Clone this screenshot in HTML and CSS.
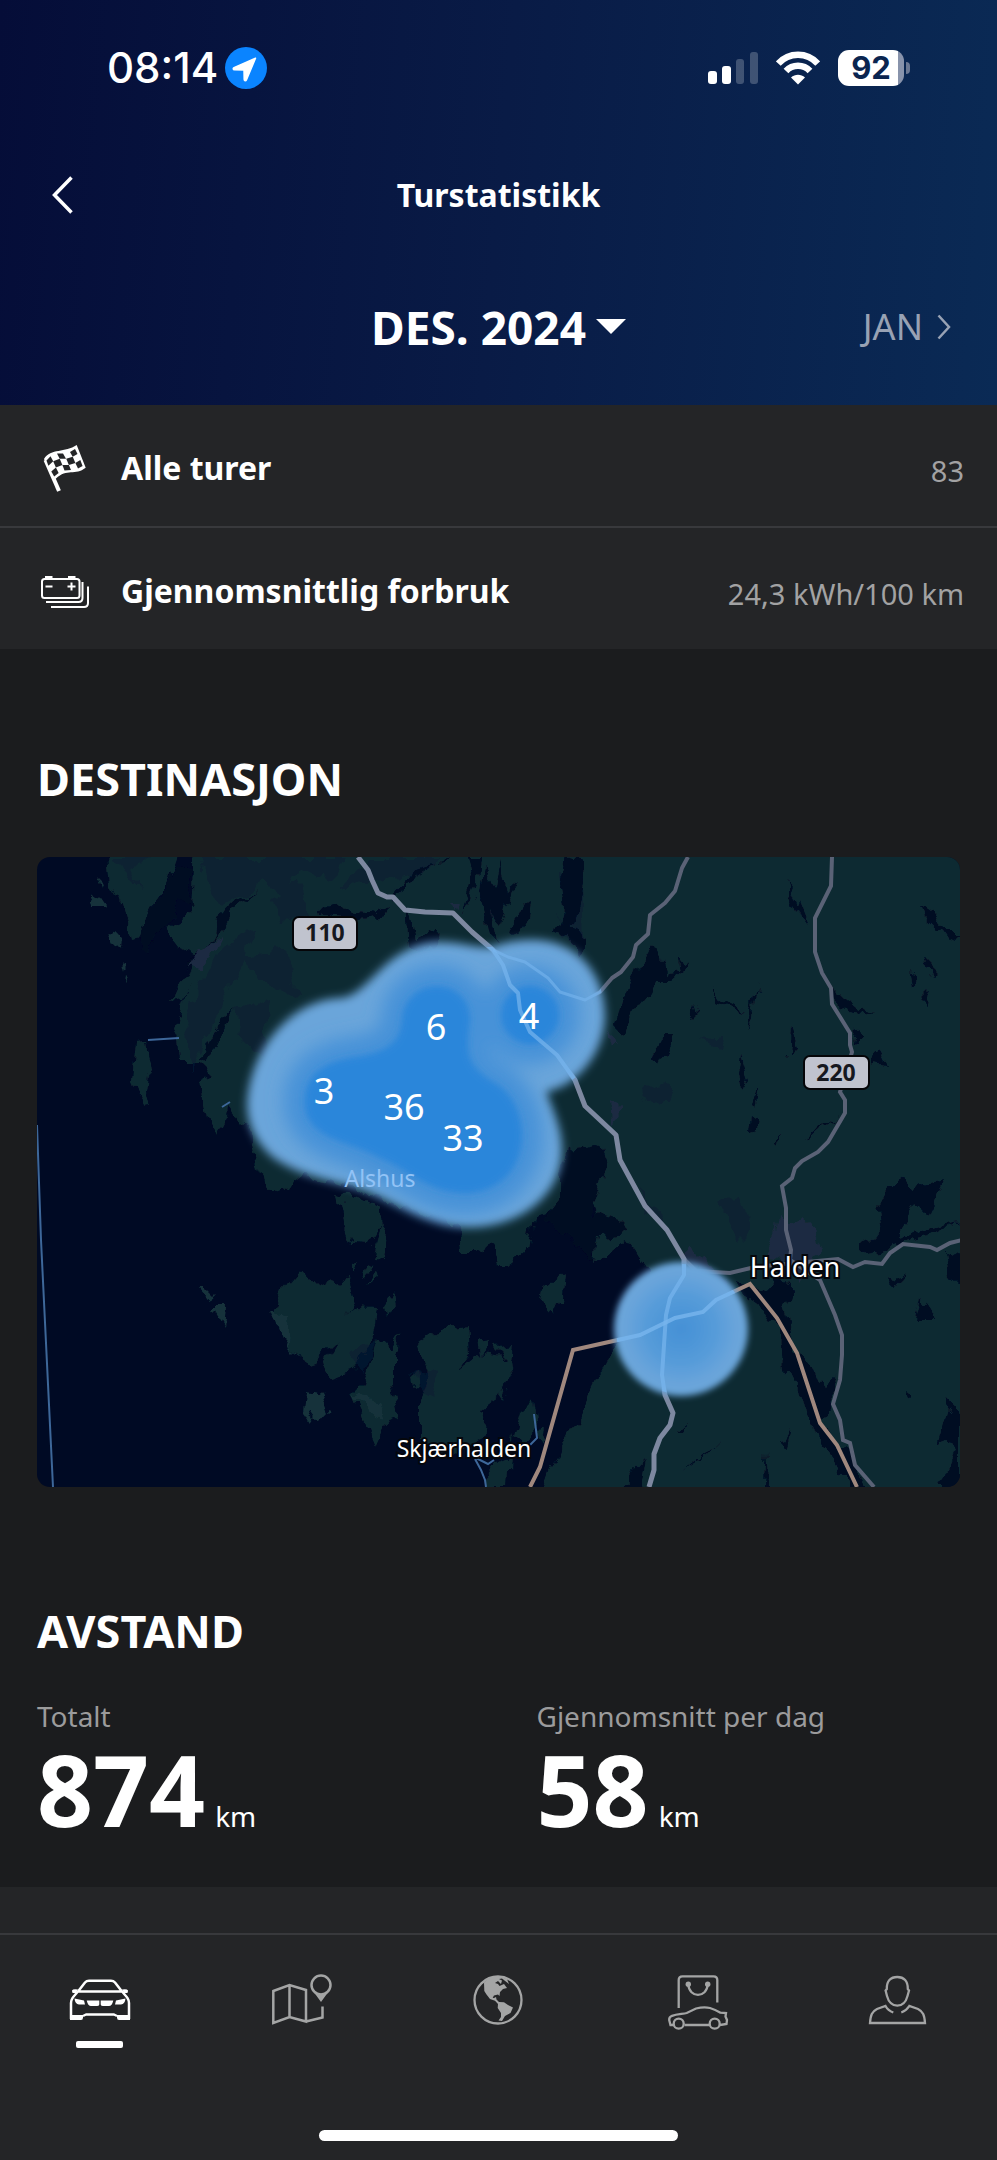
FILE: index.html
```html
<!DOCTYPE html>
<html lang="nb">
<head>
<meta charset="utf-8">
<meta name="viewport" content="width=device-width, initial-scale=1">
<title>Turstatistikk</title>
<link rel="stylesheet" href="styles.css">
</head>
<body>
<header class="header">
  <div class="status">
    <div class="status-left">
      <span class="time">08:14</span>
      <svg class="location" viewBox="0 0 42 42" aria-hidden="true"><circle cx="21" cy="21" r="21" fill="#0a84ff"/><path d="M30.5 11.3 9 20.6c-1.200.6-1 2.200.4 2.200l9.600.2.200 9.600c0 1.400 1.600 1.700 2.200.4z" fill="#fff" stroke="#fff" stroke-width="1.500" stroke-linejoin="round"/></svg>
    </div>
    <div class="status-right">
      <svg class="signal" viewBox="0 0 50 32" aria-hidden="true"><g fill="#fff"><rect x="0" y="19" width="9" height="13" rx="3"/><rect x="14" y="14" width="9" height="18" rx="3"/><g opacity=".22"><rect x="28" y="7" width="8" height="25" rx="3"/><rect x="42" y="0" width="8" height="32" rx="3"/></g></g></svg>
      <svg class="wifi" viewBox="0 0 44 34" aria-hidden="true"><g fill="none" stroke="#fff" stroke-width="6.500"><path d="M2.300 12.500C13 .8 31 .8 41.700 12.500"/><path d="M10 20C16.500 13 27.500 13 34 20"/></g><path d="M22 33.500 15 26.500C19 22.800 25 22.800 29 26.500Z" fill="#fff"/></svg>
      <div class="battery"><span class="battery-level">92</span><span class="battery-tip"></span></div>
    </div>
  </div>
  <div class="titlebar">
    <button class="back" type="button" aria-label="Tilbake"><svg viewBox="0 0 22 38"><path d="M19.500 1.500 2.500 19l17 17.500" fill="none" stroke="currentColor" stroke-width="3.500"/></svg></button>
    <h1 class="title">Turstatistikk</h1>
  </div>
  <div class="months">
    <button class="month" type="button">DES. 2024<svg viewBox="0 0 30 15" aria-hidden="true"><path d="M0 0h30L15 15z" fill="currentColor"/></svg></button>
    <button class="next-month" type="button">JAN<svg viewBox="0 0 14 26" aria-hidden="true"><path d="M1.500 1.500 12 13 1.500 24.500" fill="none" stroke="currentColor" stroke-width="2.500"/></svg></button>
  </div>
</header>

<main class="content">
  <nav class="rows" aria-label="Turer">
    <a class="row" href="#turer">
      <svg class="row-icon" viewBox="0 -3 52 52" aria-hidden="true">
        <path d="M6.500 17 20 48" stroke="#fff" stroke-width="4"/>
        <path d="M5 16C12 5 26 10 37.700 2L46.700 24.700C36 33 28 25 17 35.500L14.500 37Z" fill="#fff"/>
        <g fill="#242527"><path d="M7.500 17.500 11.500 13.300 14.200 18.300 9.400 22.800Z"/><path d="M18 10.500 24 10.500 27 15.800 20.700 15.800Z"/><path d="M31 9 36 6 38.500 11 33.700 13.800Z"/><path d="M14.200 18.300 20.700 15.800 23.400 22.100 16.900 24.600Z"/><path d="M27.200 15.800 33.700 13.800 36.400 20.100 29.900 22.100Z"/><path d="M12.300 28.500 16.900 24.600 19.600 30 15.200 33.500Z"/><path d="M23.400 22.100 29.900 22.100 32 27 25.500 27.400Z"/><path d="M36.400 20.100 41.300 17 43.600 22.900 39 25.500Z"/></g>
      </svg>
      <span class="row-label">Alle turer</span>
      <span class="row-value">83</span>
    </a>
    <a class="row" href="#forbruk">
      <svg class="row-icon" viewBox="0 0 52 52" aria-hidden="true">
        <g fill="none" stroke="#fff" stroke-width="2"><rect x="3" y="16" width="37.500" height="19" rx="2.500"/><path d="M43.500 19v16q0 4-4 4H7M49 23.500V40q0 4-4 4H12M6.500 23.500h7M28.500 23.500h8M32.500 19.500v8"/></g>
        <path d="M6 13h7.500v3H6zM29 13h7.500v3H29z" fill="#fff"/>
      </svg>
      <span class="row-label">Gjennomsnittlig forbruk</span>
      <span class="row-value">24,3 kWh/100 km</span>
    </a>
  </nav>

  <section class="section">
    <h2 class="heading">DESTINASJON</h2>
    <svg class="map" viewBox="37 857 923 630" role="img" aria-label="Kart over destinasjoner">
      <defs>
        <filter id="rough" x="-5%" y="-5%" width="110%" height="110%"><feTurbulence type="fractalNoise" baseFrequency=".07 .04" numOctaves="3" seed="4" result="n"/><feDisplacementMap in="SourceGraphic" in2="n" scale="18" xChannelSelector="R" yChannelSelector="G"/></filter>
        <filter id="soft5" x="-20%" y="-20%" width="140%" height="140%"><feGaussianBlur stdDeviation="5"/></filter>
        <filter id="soft9" x="-20%" y="-20%" width="140%" height="140%"><feGaussianBlur stdDeviation="9"/></filter>
        <filter id="soft3" x="-20%" y="-20%" width="140%" height="140%"><feGaussianBlur stdDeviation="3"/></filter>
        <radialGradient id="spot"><stop offset="0" stop-color="#4590d6"/><stop offset=".5" stop-color="#559bd9"/><stop offset=".85" stop-color="#6ba5da"/><stop offset="1" stop-color="#6ba5da"/></radialGradient>
        <clipPath id="hot"><path d="M247 1103C250 1050 290 1000 340 998 370 996 385 943 440 942 465 942 485 952 500 944 575 925 605 975 605 1015 605 1050 580 1085 546 1092 555 1115 562 1130 562 1150 562 1195 520 1227 470 1227 430 1227 400 1205 375 1195 350 1182 300 1180 270 1155 255 1140 247 1125 247 1103Z"/><circle cx="681" cy="1329" r="65"/></clipPath>
        <g id="highways" fill="none" stroke-linejoin="round">
          <path d="M358 857 368 870 372 880 378 893 387 897 393 897 405 910 425 912 453 913 472 932 493 950 503 965 510 985 518 993 520 1010 530 1032 557 1055 575 1080 585 1106 600 1120 616 1135 620 1160 645 1206 667 1230 684 1259 684 1275 670 1298 666 1315 662 1375 665 1395 673 1413 670 1425 660 1438 654 1454 654 1470 649 1487"/>
        </g>
        <path id="north" fill="none" stroke-linejoin="round" d="M493 950 508 957 525 962 548 978 560 992 585 1000 600 992 612 978 621 972 633 957 636 945 648 934 650 915 665 903 675 891 682 868 688 857"/>
        <path id="border" fill="none" d="M530 1487 540 1467 573 1350 640 1335 675 1318 703 1312 716 1300 750 1284 777 1318 797 1353 820 1423 837 1445 857 1487"/>
      </defs>
      <rect x="37" y="857" width="923" height="630" fill="#000a24"/>
      <g filter="url(#rough)">
        <g fill="#0e2a32">
          <path d="M106 840 182 840 168 880 160 895 150 910 142 932 132 936 126 918 120 900 110 885Z"/>
          <path d="M196 840H980V1500H540L560 1450 580 1420 595 1385 612 1350 640 1330 650 1270 628 1240 596 1262 600 1225 585 1180 570 1150 582 1195 560 1210 532 1215 526 1255 510 1268 498 1268 492 1245 478 1252 462 1252 460 1225 430 1215 380 1200 350 1185 292 1175 280 1193 262 1182 250 1135 228 1105 206 1068 200 1062 178 1062 176 1040 180 1010 188 985 198 955 180 948 165 930 192 912 194 890Z"/>
          <path d="M128 920 140 925 145 935 132 938ZM200 1080 212 1075 230 1100 228 1118 218 1137 208 1118Z"/>
          <path d="M136 1043 147 1042 149 1056 152 1066 147 1076 145 1088 152 1102 145 1103 138 1092 132 1078Z"/>
          <path d="M180 980 190 982 182 1000 170 1002ZM176 1012 184 1020 176 1036 173 1030Z"/>
          <path d="M338 1192 362 1198 382 1208 380 1225 368 1243 352 1242 345 1225ZM381 1222 388 1232 384 1255 372 1254Z"/>
          <path d="M283 1290 300 1270 315 1288 345 1278 354 1310 342 1335 315 1360 300 1365 290 1350 274 1312ZM358 1305 378 1306 374 1335 355 1372 330 1380 322 1365ZM378 1340 392 1350 392 1382 400 1420 384 1425 375 1445 352 1394 364 1382Z"/>
          <path d="M418 1345 440 1330 466 1326 468 1355 458 1370 480 1352 510 1357 512 1372 503 1392 480 1410 486 1420 484 1440 450 1455 420 1440 420 1400 430 1380ZM478 1342 490 1340 490 1350 480 1352ZM495 1345 512 1343 510 1360Z"/>
          <path d="M543 1290 562 1275 560 1300 554 1314 541 1300ZM520 1412 532 1400 536 1430 520 1445 512 1440ZM488 1465 512 1455 510 1487H490ZM535 1435 545 1425 542 1445Z"/>
          <path d="M352 1265 358 1262 352 1275ZM362 1275 368 1262 370 1272ZM372 1285 378 1272 380 1280ZM384 1305 392 1292 394 1305 386 1320ZM392 1345 400 1332 399 1350 392 1358ZM412 1375 418 1372 420 1385 414 1388ZM500 1395 508 1385 505 1402Z"/>
        </g>
        <g fill="#14323a"><path d="M90 904 97 892 106 905 104 908 92 908ZM107 938 116 931 121 936 120 944 112 946ZM97 878 103 884 101 888ZM122 960 127 965 124 968ZM124 974 128 978 123 984ZM308 1392 322 1395 330 1412 318 1425 306 1408ZM198 1286 206 1286 216 1296 210 1299ZM212 1308 226 1308 224 1328ZM270 1310 290 1318 288 1345 298 1365 282 1340ZM352 1394 378 1400 385 1420 368 1412Z"/></g>
        <g fill="#091d34" opacity=".65">
          <path d="M200 857 345 857 330 880 300 870 285 900 262 880 248 892 225 905 205 890ZM112 857 150 857 130 870 140 890ZM340 890 430 870 440 857 370 857ZM270 900 300 880 310 915 280 920ZM205 975 235 935 255 930 230 985 215 1020 190 1070 188 1010ZM240 955 285 950 300 995 260 980ZM235 1010 270 1000 262 1060 240 1035ZM560 870 580 870 582 950 565 940ZM640 1090 665 1085 672 1100 645 1105ZM700 1040 725 1037 720 1048ZM640 1190 655 1205 665 1230 650 1215ZM720 1200 735 1195 750 1230 740 1240ZM410 1370 440 1375 435 1400ZM350 1350 378 1340 365 1370Z"/>
        </g>
        <g fill="#000a24">
          <path d="M175 862 195 868 190 885 195 905 178 900 168 925 158 935 150 950 142 950 140 935 150 910 165 890Z"/>
          <path d="M255 892 232 903 225 914 218 920 215 935 190 960 186 972 202 950 222 930 235 910ZM235 1010 218 1040 206 1063 200 1060 218 1025Z"/>
          <path d="M465 857 480 857 478 880 472 895 463 915 472 880ZM485 870 495 885 500 862 508 890 520 880 505 905 500 925 492 915 498 945 488 935 480 900ZM525 905 532 900 530 918 518 935 510 930ZM567 857 580 860 582 880 573 915 568 940 557 935 563 910 560 885ZM553 905 562 925 575 930 585 945 580 955 568 938Z"/>
          <path d="M405 907 412 920 416 940 438 928 437 940 420 955 408 945ZM320 912 350 908 375 912 395 902 388 915 350 920 322 918Z"/>
          <path d="M458 857 450 857 435 865 405 885 395 897 393 893 412 872Z"/>
          <path d="M655 945 662 960 664 975 680 972 678 958 690 962 685 970 672 980 655 980 650 992 640 1005 622 1035 612 1025 620 1000 628 980 640 972ZM660 1037 675 1037 662 1065 652 1060ZM785 877 792 885 808 925 800 915ZM757 978 753 1020 748 1035 752 1005ZM712 985 722 1000 745 1012 735 1010 718 1002ZM740 1055 748 1080 742 1090 737 1075ZM697 1002 700 1010 692 1018ZM792 1030 798 1050 790 1058ZM830 985 845 1000 870 1015 850 1012 838 1005ZM857 1028 865 1035 855 1048ZM880 1050 888 1065 870 1062ZM750 1115 762 1125 748 1130ZM780 1130 775 1145 770 1142ZM840 1112 820 1132 808 1142 818 1130ZM918 905 932 915 945 932 965 932 950 940 935 930 922 918ZM910 970 918 980 912 985ZM925 960 935 970 930 975ZM920 1000 930 990 925 1005ZM760 1087 755 1105 753 1100Z"/>
          <path d="M568 1150 600 1145 608 1165 598 1195 592 1215 620 1222 630 1232 600 1235 595 1260 580 1250 555 1230 545 1218 560 1200 560 1175Z"/>
          <path d="M890 1190 905 1178 912 1188 942 1180 925 1215 915 1205 900 1230 890 1250 865 1255 860 1245 878 1235 875 1205ZM895 1240 960 1222 930 1238 890 1246ZM890 1275 905 1278 900 1285ZM920 1295 930 1310 935 1320 915 1320ZM903 1390 910 1395 905 1400ZM950 1400 960 1420 960 1487H940L955 1450 938 1440ZM945 1250 965 1255V1290L950 1275Z"/>
          <path d="M735 1278 765 1290 778 1275 790 1290 785 1310 795 1350 812 1365 820 1385 832 1375 835 1410 822 1425 845 1450 868 1490 850 1490 835 1460 815 1435 800 1390 782 1370 780 1330 765 1310 745 1295Z"/>
          <path d="M720 1442 700 1460 685 1470 700 1458ZM766 1450 768 1487 764 1487ZM688 1425 685 1435 676 1435ZM645 1460 640 1485 620 1487ZM790 1430 785 1450 780 1445Z"/>
        </g>
        <g fill="#1d2b42"><path d="M776 1215 790 1222 800 1215 815 1228 820 1250 800 1285 785 1262 765 1255 772 1240ZM690 1246 700 1258 730 1280 725 1285 700 1268 682 1258ZM608 1100 618 1105 620 1120 610 1125ZM605 1035 618 1045 608 1045ZM222 935 215 950 200 968 190 965 200 948ZM448 905 458 905 455 912Z"/></g>
      </g>
      <g fill="none" stroke="#3d6799" stroke-width="2"><path d="M37 1125 41 1240 53 1487M148 1040 179 1038M222 1107 230 1102"/><path d="M534 1414 537 1438 530 1445M475 1459 481 1470 485 1480 486 1487M476 1458 488 1464 494 1460"/></g>
      <use href="#north" stroke="#5a6276" stroke-width="4"/>
      <g fill="none" stroke="#5a6276" stroke-width="4"><path d="M832 857 831 886 815 918 815 952 822 973 831 988 832 1004 850 1033 850 1045 852 1052 840 1092 845 1100 845 1113 828 1142 818 1152 802 1161 795 1168 792 1178 782 1186 786 1208 786 1230 791 1250 790 1260 820 1280 835 1315 842 1335 842 1355 840 1380 833 1404 840 1420 843 1440 850 1443 855 1465 874 1487"/><path d="M684 1259 696 1271 730 1273 755 1267 838 1259 853 1267 865 1262 882 1264 890 1253 903 1244 930 1247 937 1250 950 1243 962 1240"/></g>
      <use href="#border" stroke="#a0887e" stroke-width="4"/>
      <use href="#highways" stroke="#7d88a0" stroke-width="5"/>
      <path filter="url(#soft5)" fill="#6ba5da" d="M247 1103C250 1050 290 1000 340 998 370 996 385 943 440 942 465 942 485 952 500 944 575 925 605 975 605 1015 605 1050 580 1085 546 1092 555 1115 562 1130 562 1150 562 1195 520 1227 470 1227 430 1227 400 1205 375 1195 350 1182 300 1180 270 1155 255 1140 247 1125 247 1103Z"/>
      <g filter="url(#soft9)" fill="#4692d8" stroke="#4692d8" stroke-width="42" stroke-linejoin="round"><path d="M305 1098C307 1070 330 1062 350 1058 385 1053 400 1045 402 1020 405 975 470 975 470 1020 465 1055 468 1065 490 1080 510 1090 522 1110 522 1138 520 1170 500 1190 470 1193 430 1195 410 1170 380 1158 350 1140 302 1140 305 1098Z"/><circle cx="530" cy="1015" r="28"/></g>
      <g filter="url(#soft3)" fill="#2986da"><path d="M305 1098C307 1070 330 1062 350 1058 385 1053 400 1045 402 1020 405 975 470 975 470 1020 465 1055 468 1065 490 1080 510 1090 522 1110 522 1138 520 1170 500 1190 470 1193 430 1195 410 1170 380 1158 350 1140 302 1140 305 1098Z"/><circle cx="530" cy="1015" r="29"/></g>
      <circle cx="681" cy="1329" r="67" fill="url(#spot)" filter="url(#soft3)"/>
      <g clip-path="url(#hot)" stroke="#78b5ee"><use href="#highways" stroke-width="4" opacity=".7"/><use href="#north" stroke-width="3" opacity=".6"/><use href="#border" stroke-width="4" opacity=".8"/></g>
      <g class="shield"><rect x="293" y="917" width="64" height="33" rx="6"/><text x="325" y="941">110</text><rect x="804" y="1056" width="65" height="33" rx="6"/><text x="836" y="1081">220</text></g>
      <g class="count"><text x="436" y="1040">6</text><text x="529" y="1029">4</text><text x="324" y="1104">3</text><text x="404" y="1120">36</text><text x="463" y="1151">33</text></g>
      <text class="place faded" x="380" y="1187">Alshus</text>
      <text class="place" x="464" y="1457">Skjærhalden</text>
      <text class="place town" x="795" y="1277">Halden</text>
    </svg>
  </section>

  <section class="section">
    <h2 class="heading">AVSTAND</h2>
    <dl class="stats">
      <div class="stat"><dt>Totalt</dt><dd>874<small>km</small></dd></div>
      <div class="stat"><dt>Gjennomsnitt per dag</dt><dd>58<small>km</small></dd></div>
    </dl>
  </section>
</main>

<footer class="footer">
  <nav class="tabs" aria-label="Hovedmeny">
    <a class="tab active" href="#bil" aria-label="Bil" aria-current="page">
      <svg viewBox="0 0 64 60"><g fill="none" stroke="currentColor" stroke-width="2.500" stroke-linejoin="round"><path d="M10 19.500 17 10.500Q18.500 8.800 21 8.800H43Q45.500 8.800 47 10.500L54 19.500H10C5 25 3 27 3 31V47M54 19.500C59 25 61 27 61 31V47M15 44 18 42.500H46L49 44"/></g><path d="M2 43h13v2.500q0 2.500-2 2.500H2zM62 43H49v2.500q0 2.500 2 2.500h11zM4 18.500q1-2 6-1L8 21H5q-1 0-1-2.500zM60 18.500q-1-2-6-1L56 21h3q1 0 1-2.500zM6.500 26.500 16 28.500 17 32.500H11Q7 32 6.500 26.500ZM57.500 26.500 48 28.500 47 32.500H53Q57 32 57.500 26.500ZM18.700 28.500H31.300V32.500Q31 34 29 34H23Q20 34 18.700 28.500ZM45.300 28.500H32.700V32.500Q33 34 35 34H41Q44 34 45.300 28.500Z" fill="currentColor"/></svg>
    </a>
    <a class="tab" href="#kart" aria-label="Kart">
      <svg viewBox="0 0 64 60"><g fill="none" stroke="currentColor" stroke-width="2.500"><path d="M6.300 19 22.500 13 39 18V49.500L22.500 45 6.300 51ZM22.500 13V45M39 49.500 55.500 45.500V34.500"/><circle cx="54" cy="13" r="9.500"/></g><path d="M46 19Q54 25 62 19L54 30Z" fill="currentColor"/></svg>
    </a>
    <a class="tab" href="#utforsk" aria-label="Utforsk">
      <svg viewBox="0 0 64 60"><circle cx="32" cy="28" r="23.500" fill="none" stroke="currentColor" stroke-width="2.300"/><path d="M18 10.500 24 5.500 32 4 41 7 43 12 38.500 8.500 36 6.500 33 7 36 8.500 35 12 32 9 29 11 32 12 33.500 14 38 12 41 16 37 17 34 20 33.500 24 32 22.500 28 23.500 26.700 25.700 28 26 30 25 30.500 27.500 33 30 38 30.300 42 33 47 35.500 44.500 41 39 44 36 49 32.500 48.500 35 45 35 41 31.700 36 32 32 29 28.800 24 27 20.500 22.500 18.300 19Z" fill="currentColor"/></svg>
    </a>
    <a class="tab" href="#butikk" aria-label="Butikk">
      <svg viewBox="0 0 64 60"><g fill="none" stroke="currentColor" stroke-width="2.300"><path d="M12.700 36V8Q12.700 4.300 16.500 4.300H47.500Q51.300 4.300 51.300 8V30.500M22.300 12.300C23 26.500 41 26.500 41.700 12.300"/><path d="M7.500 53H4.500L3.200 48Q3 45 6 43.800C11 42 17 42 20.700 41L30 36.500Q38 34.500 44 36 50 38 54.500 40.700L60 41 59.500 44.500 61 48 60.500 52 54 53M18.500 53H43"/><circle cx="12.700" cy="51.700" r="5"/><circle cx="48.700" cy="51.700" r="5"/></g><circle cx="22.300" cy="12.300" r="2.700" fill="currentColor"/><circle cx="41.700" cy="12.300" r="2.700" fill="currentColor"/></svg>
    </a>
    <a class="tab" href="#profil" aria-label="Profil">
      <svg viewBox="0 0 64 60"><g fill="none" stroke="currentColor" stroke-width="2.300"><path d="M32.300 5C39 5 43 9 42.800 17L44 18.500 42.500 24C41 30 37 33.700 32.300 33.700S23.500 30 22 24L20.600 18.500 21.800 17C21.500 9 25.500 5 32.300 5Z"/><path d="M28.300 40.500Q23 38.500 20.500 34L12 37C7 39.500 5.500 43 5 51H60C59.500 43 58 39.500 53 37L44.300 34Q41.500 38.500 36.300 40.500"/></g></svg>
    </a>
  </nav>
  <div class="home-indicator"></div>
</footer>
</body>
</html>
```

FILE: styles.css
```css
* {
  box-sizing: border-box;
}

body {
  margin: 0;
  min-height: 100vh;
  display: flex;
  flex-direction: column;
  background: #242527;
  color: #fff;
  font-family: "Noto Sans", "Open Sans", sans-serif;
}

button {
  padding: 0;
  border: 0;
  background: none;
  color: inherit;
  font: inherit;
}

a {
  color: inherit;
  text-decoration: none;
}

svg {
  display: block;
  flex: none;
}

h1,
h2,
dl,
dd {
  margin: 0;
}

.header {
  background: linear-gradient(95deg, #050d38 0%, #091b46 50%, #0a2a55 100%);
}

.status {
  height: 135px;
  padding: 0 87px 0 107px;
  display: flex;
  align-items: center;
  justify-content: space-between;
  font-family: Inter, "Liberation Sans", sans-serif;
}

.status-left {
  display: flex;
  align-items: center;
  gap: 7px;
}

.time {
  font-size: 42px;
  font-weight: 500;
}

.location {
  width: 42px;
  height: 42px;
}

.status-right {
  display: flex;
  align-items: center;
  gap: 18px;
}

.signal {
  width: 50px;
  height: 32px;
}

.wifi {
  width: 44px;
  height: 34px;
}

.battery {
  display: flex;
  align-items: center;
  gap: 2px;
}

.battery-level {
  width: 66px;
  height: 36px;
  border-radius: 11px;
  background: linear-gradient(90deg, #fff 60px, #8893ab 60px);
  color: #0a2550;
  font-size: 31px;
  font-weight: 700;
  line-height: 36px;
  text-align: center;
}

.battery-tip {
  width: 4px;
  height: 12px;
  border-radius: 0 6px 6px 0;
  background: #6b7893;
}

.titlebar {
  height: 119px;
  padding: 0 52px;
  display: grid;
  grid-template-columns: 22px 1fr 22px;
  align-items: center;
}

.back svg {
  width: 22px;
  height: 38px;
}

.title {
  font-size: 32px;
  line-height: 44px;
  text-align: center;
}

.months {
  height: 151px;
  padding: 0 46px 6px;
  display: grid;
  grid-template-columns: 1fr auto 1fr;
  align-items: center;
}

.month {
  grid-column: 2;
  display: flex;
  align-items: center;
  gap: 10px;
  font-size: 46px;
  font-weight: 700;
}

.month svg {
  width: 30px;
  height: 15px;
}

.next-month {
  justify-self: end;
  display: flex;
  align-items: center;
  gap: 14px;
  color: #98a2b4;
  font-size: 36px;
}

.next-month svg {
  width: 14px;
  height: 26px;
}

.content {
  padding-bottom: 18px;
  background: #1b1c1e;
}

.rows {
  background: #242527;
}

.row {
  height: 121px;
  padding: 0 33px 0 39px;
  display: flex;
  align-items: center;
}

.row + .row {
  height: 123px;
  border-top: 2px solid #38393c;
}

.row-icon {
  width: 52px;
  height: 52px;
  margin-right: 30px;
}

.row-label {
  flex: 1;
  padding-top: 4px;
  font-size: 32px;
  font-weight: 700;
}

.row-value {
  padding-top: 10px;
  color: #a2a2a3;
  font-size: 29px;
}

.section {
  padding: 100px 37px 0;
}

.heading {
  font-size: 45px;
  line-height: 60px;
}

.map {
  width: 100%;
  height: auto;
  margin: 48px 0 14px;
  border-radius: 13px;
}

.shield rect {
  fill: #c0c3ce;
  stroke: #050508;
  stroke-width: 2;
}

.shield text {
  fill: #16181f;
  font-size: 23px;
  font-weight: 700;
  text-anchor: middle;
}

.count {
  fill: #fff;
  font-size: 36px;
  text-anchor: middle;
}

.place {
  fill: #fff;
  stroke: #05070c;
  stroke-width: 4;
  paint-order: stroke;
  font-size: 23px;
  text-anchor: middle;
}

.place.town {
  font-size: 27px;
}

.place.faded {
  fill: #92c3f6;
  stroke: none;
}

.stats {
  margin-top: 35px;
  display: grid;
  grid-template-columns: 1fr 1fr;
  column-gap: 76px;
}

.stat dt {
  color: #9b9b9c;
  font-size: 28px;
  line-height: 40px;
}

.stat dd {
  display: flex;
  align-items: baseline;
  gap: 10px;
  font-size: 98px;
  font-weight: 700;
  line-height: 106px;
}

.stat small {
  font-size: 28px;
  font-weight: 400;
}

.footer {
  margin-top: auto;
  padding: 37px 0 19px;
  border-top: 2px solid #38393c;
}

.tabs {
  display: grid;
  grid-template-columns: repeat(5, 1fr);
}

.tab {
  height: 158px;
  display: flex;
  flex-direction: column;
  align-items: center;
  gap: 9px;
  color: #a4a5a5;
}

.tab svg {
  width: 64px;
  height: 60px;
  overflow: visible;
}

.tab.active {
  color: #fff;
}

.tab.active::after {
  content: "";
  width: 47px;
  height: 7px;
  border-radius: 2px;
  background: #fff;
}

.home-indicator {
  width: 36%;
  height: 11px;
  margin: 0 auto;
  border-radius: 6px;
  background: #fff;
}
```
